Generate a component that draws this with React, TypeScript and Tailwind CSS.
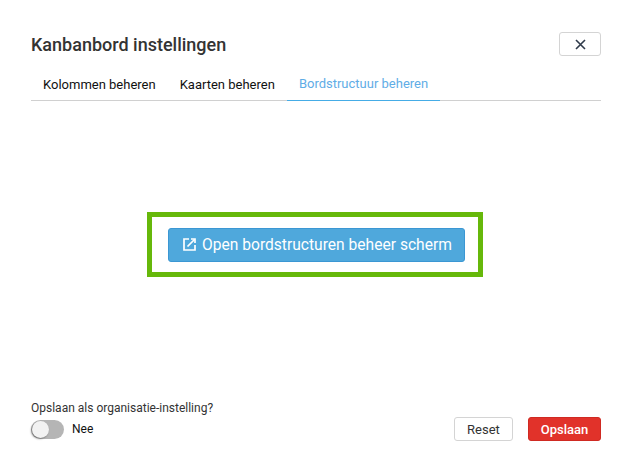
function OpenIcon() {
  return (
    <svg width="13" height="13" viewBox="0 0 13 13" fill="none" stroke="currentColor" strokeWidth="1.7" className="-mt-[3px] shrink-0">
      <path d="M6 1H1v11h11V7" />
      <path d="M8 1h4v4" />
      <path d="M11.5 1.5 4.5 8.5" />
    </svg>
  );
}

function CloseIcon() {
  return (
    <svg width="11" height="11" viewBox="0 0 11 11" fill="none" stroke="#2f3a4a" strokeWidth="1.6">
      <path d="M1 1l9 9M10 1l-9 9" />
    </svg>
  );
}

export default function App() {
  return (
    <div className="flex h-[465px] w-[632px] flex-col bg-white px-[31px] font-['Roboto',sans-serif] text-[#333]">
      <div className="flex items-start justify-between pt-[32px]">
        <h1 className="text-[18px] font-medium leading-[26px] text-[#333]">Kanbanbord instellingen</h1>
        <button className="flex h-[24px] w-[42px] items-center justify-center rounded-[3px] border border-[#d4d4d4] bg-white">
          <CloseIcon />
        </button>
      </div>

      <div className="mt-[8px] flex h-[35px] border-b border-[#d0d0d0] text-[13px]">
        <div className="flex h-[35px] items-center px-[12px] pt-[2px] text-[#111]">Kolommen beheren</div>
        <div className="flex h-[35px] items-center px-[12px] pt-[2px] text-[#111]">Kaarten beheren</div>
        <div className="flex h-[35px] items-center border-b border-[#45ace6] px-[12px] pt-[2px] text-[#5fade6]">Bordstructuur beheren</div>
      </div>

      <div className="flex-1 pl-[116px] pt-[111px]">
        <div className="h-[65px] w-[336px] border-[5px] border-[#66b80a] pl-[16px] pt-[11px]">
          <button className="flex h-[34px] w-[297px] items-center gap-[6px] rounded-[3px] border border-[#3b97d3] bg-[#4fa8dc] pl-[14px] pt-[2px] text-[15.6px] text-white">
            <OpenIcon />
            Open bordstructuren beheer scherm
          </button>
        </div>
      </div>

      <div className="flex items-end justify-between pb-[24px]">
        <div className="pb-[2px]">
          <div className="text-[12px] leading-[14px] text-[#333]">Opslaan als organisatie-instelling?</div>
          <div className="mt-[5px] flex items-center gap-[8px]">
            <div className="flex h-[19px] w-[33px] items-center rounded-full bg-[#b5b5b5] pl-[1px]">
              <div className="h-[17px] w-[17px] rounded-full bg-[#f2f2f2] shadow-[-1px_1px_2px_rgba(0,0,0,0.4)]" />
            </div>
            <span className="mb-[1px] text-[12px] text-[#111]">Nee</span>
          </div>
        </div>
        <div className="flex gap-[15px] text-[13px]">
          <button className="h-[24px] w-[59px] rounded-[3px] border border-[#d4d4d4] bg-white pt-[2px] text-[#333]">Reset</button>
          <button className="h-[24px] w-[73px] rounded-[3px] border border-[#cf2a22] bg-[#e1322a] pt-[2px] font-medium text-white">Opslaan</button>
        </div>
      </div>
    </div>
  );
}
